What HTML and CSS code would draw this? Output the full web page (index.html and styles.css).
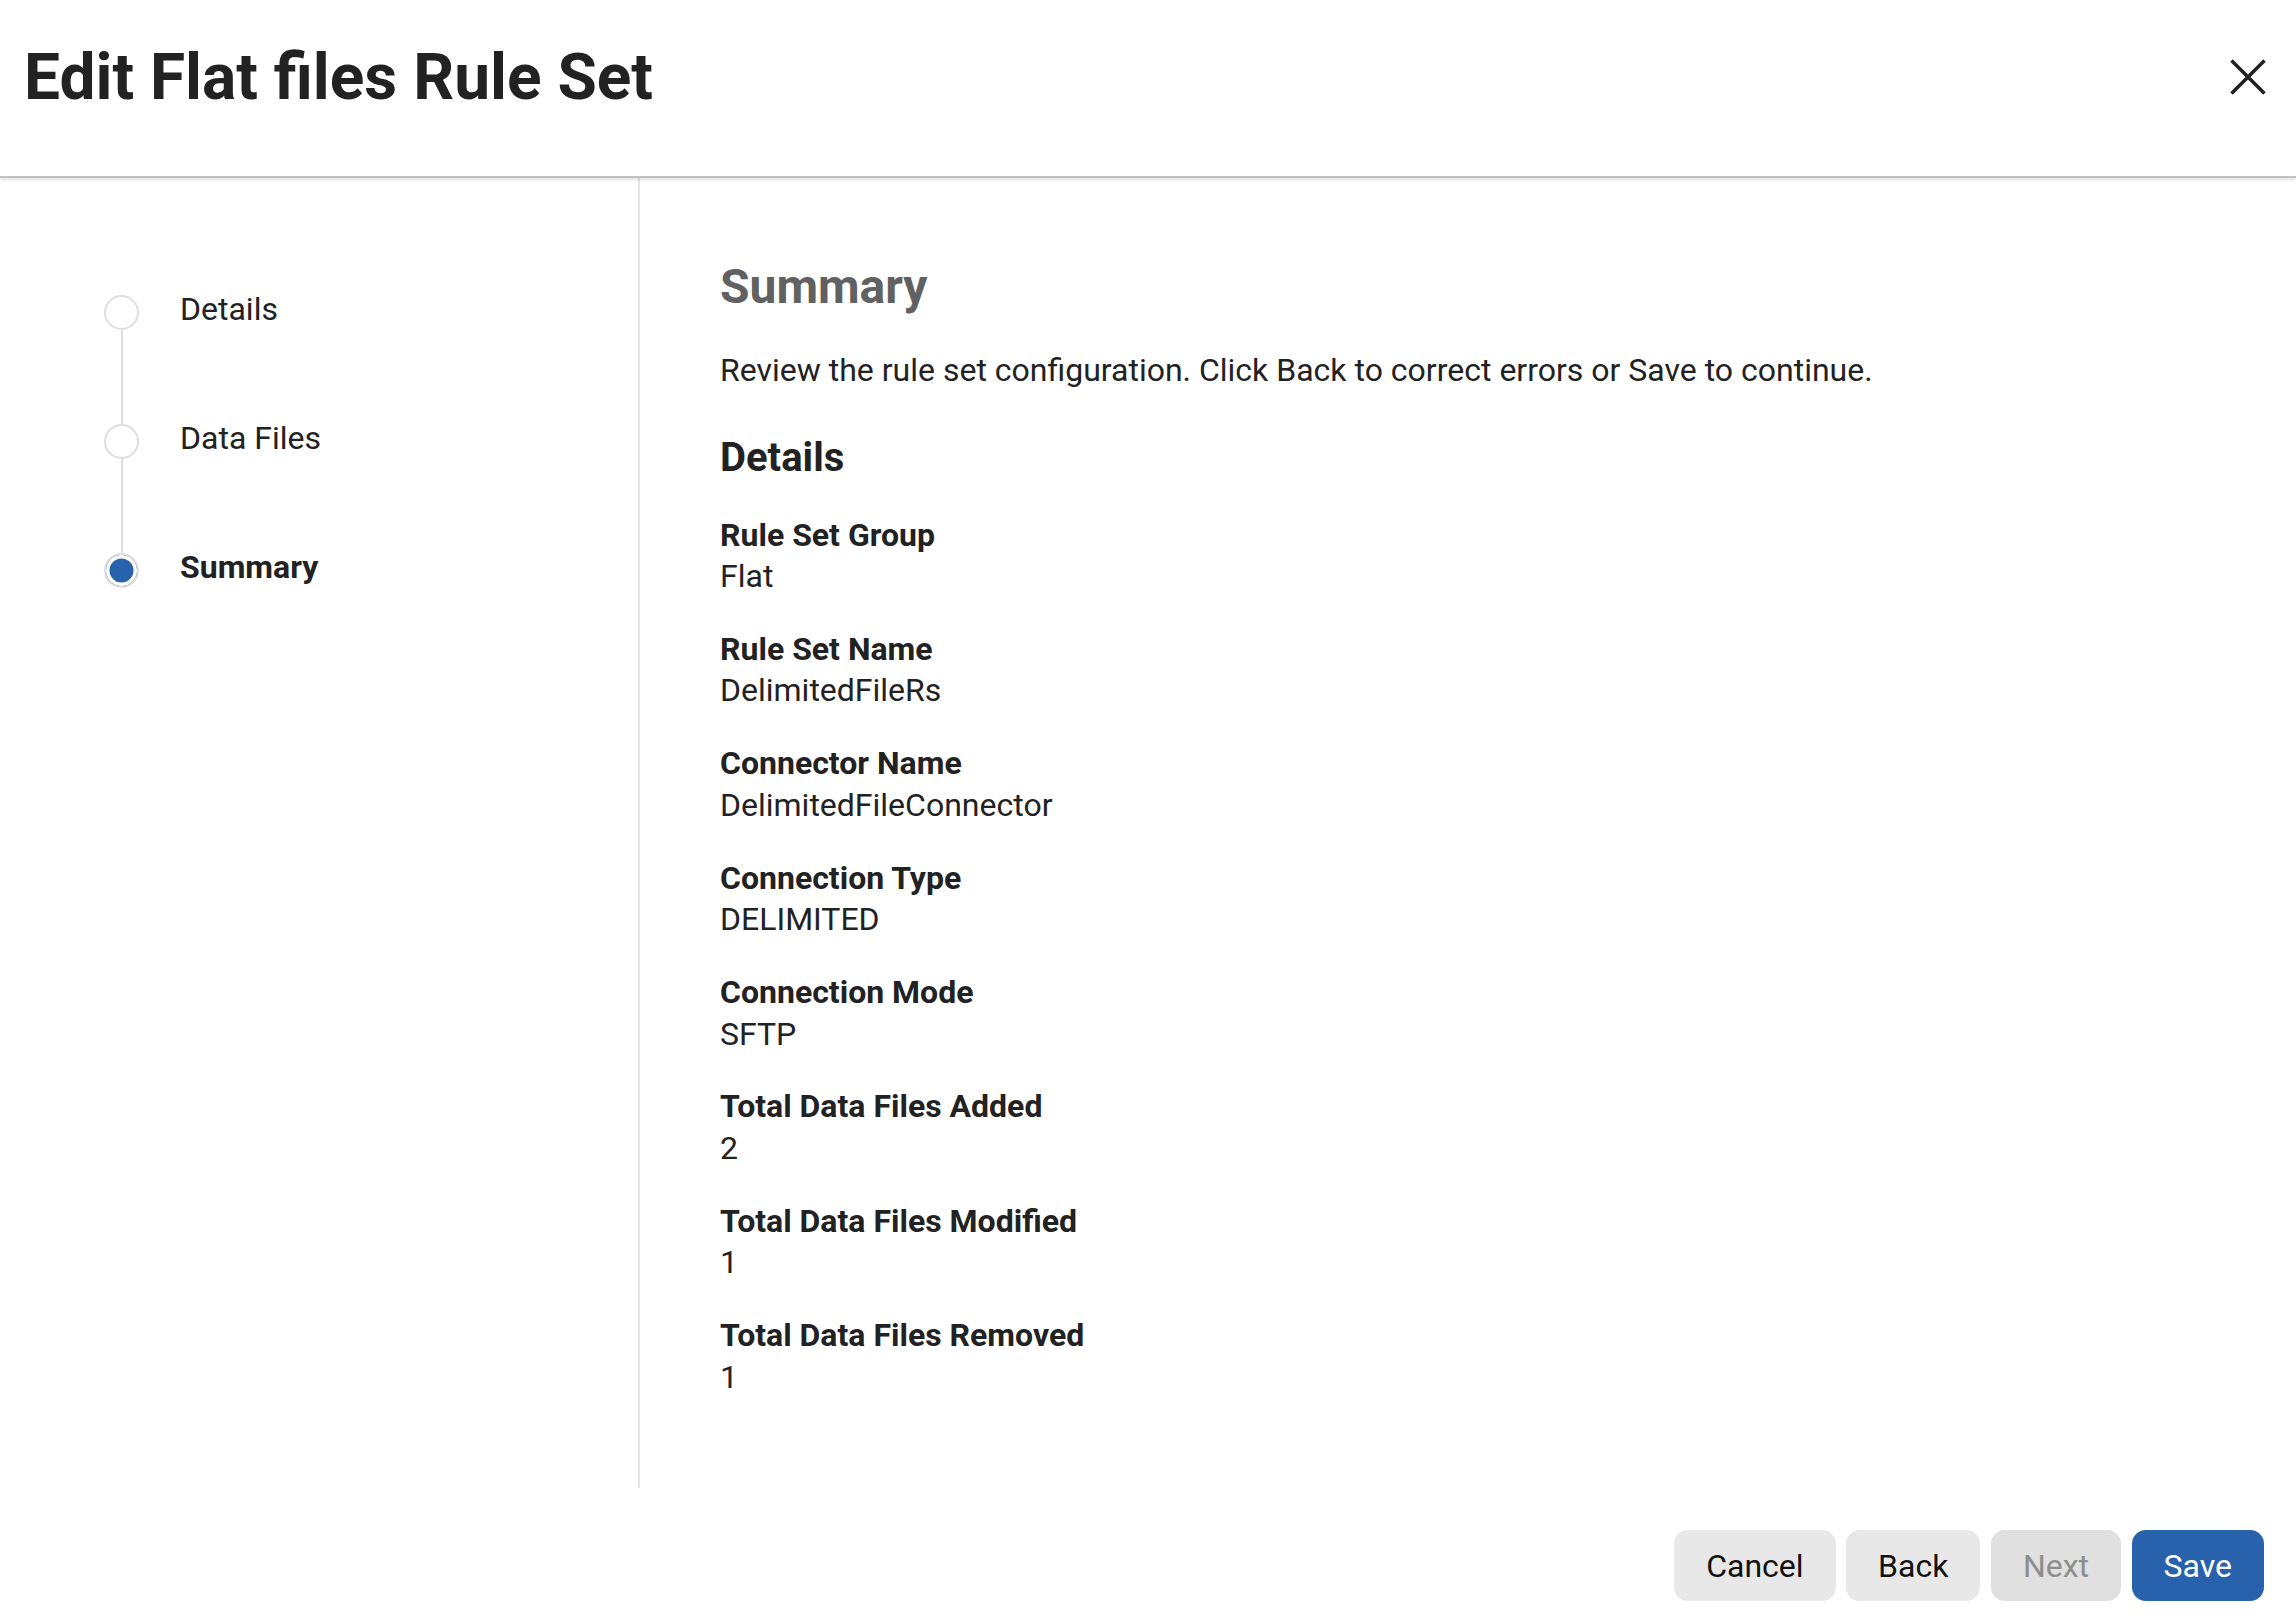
FILE: index.html
```html
<html>
<head>
    <title>Edit Flat files Rule Set</title>
<link rel="stylesheet" href="styles.css">
</head>
<body>
<div class="dialog">
    <div class="dialog-header">
        <h1 class="dialog-title">Edit Flat files Rule Set</h1>
        <button class="close-btn" title="Close">
            <svg width="36" height="36" viewBox="0 0 36 36">
                <path d="M1.5 1.5 L34.5 34.5 M34.5 1.5 L1.5 34.5" stroke="#222" stroke-width="3.6" fill="none"/>
            </svg>
        </button>
    </div>

    <div class="dialog-body">
        <div class="steps">
            <div class="step done">
                <div class="step-marker">
                    <span class="step-dot"></span>
                    <span class="step-line"></span>
                </div>
                <span class="step-label">Details</span>
            </div>
            <div class="step done">
                <div class="step-marker">
                    <span class="step-dot"></span>
                    <span class="step-line"></span>
                </div>
                <span class="step-label">Data Files</span>
            </div>
            <div class="step current">
                <div class="step-marker">
                    <span class="step-dot"></span>
                </div>
                <span class="step-label">Summary</span>
            </div>
        </div>

        <div class="summary">
            <h2 class="summary-title">Summary</h2>
            <p class="summary-intro">Review the rule set configuration. Click Back to correct errors or Save to continue.</p>

            <h3 class="section-title">Details</h3>
            <dl class="fields">
                <div class="field">
                    <dt>Rule Set Group</dt>
                    <dd>Flat</dd>
                </div>
                <div class="field">
                    <dt>Rule Set Name</dt>
                    <dd>DelimitedFileRs</dd>
                </div>
                <div class="field">
                    <dt>Connector Name</dt>
                    <dd>DelimitedFileConnector</dd>
                </div>
                <div class="field">
                    <dt>Connection Type</dt>
                    <dd>DELIMITED</dd>
                </div>
                <div class="field">
                    <dt>Connection Mode</dt>
                    <dd>SFTP</dd>
                </div>
                <div class="field">
                    <dt>Total Data Files Added</dt>
                    <dd>2</dd>
                </div>
                <div class="field">
                    <dt>Total Data Files Modified</dt>
                    <dd>1</dd>
                </div>
                <div class="field">
                    <dt>Total Data Files Removed</dt>
                    <dd>1</dd>
                </div>
            </dl>
        </div>
    </div>

    <div class="dialog-footer">
        <button class="btn">Cancel</button>
        <button class="btn">Back</button>
        <button class="btn" disabled>Next</button>
        <button class="btn btn-primary">Save</button>
    </div>
</div>
</body>
</html>
```

FILE: styles.css
```css
html, body {
    margin: 0;
    height: 100%;
}
body {
    font-family: Roboto, "Liberation Sans", sans-serif;
    color: #222;
    background: #fff;
}
.dialog {
    display: flex;
    flex-direction: column;
    height: 100%;
}

/* header */
.dialog-header {
    height: 154px;
    padding: 0 30px 22px 24px;
    display: flex;
    align-items: center;
    justify-content: space-between;
    border-bottom: 2px solid #c2c2c2;
    box-shadow: 0 2px 3px rgba(0, 0, 0, 0.12);
    position: relative;
    z-index: 1;
}
.dialog-title {
    margin: 0;
    font-size: 64px;
    line-height: 77px;
    font-weight: 700;
    color: #222;
}
.close-btn {
    border: none;
    background: none;
    padding: 0;
    width: 36px;
    height: 36px;
    cursor: pointer;
}
.close-btn svg {
    display: block;
}

/* body */
.dialog-body {
    flex: 1;
    display: flex;
    min-height: 0;
}
.steps {
    width: 534px;
    padding: 117px 0 0 104px;
    border-right: 2px solid #e2e2e2;
}
.step {
    display: flex;
    align-items: flex-start;
}
.step-marker {
    width: 35px;
    display: flex;
    flex-direction: column;
    align-items: center;
}
.step-dot {
    box-sizing: border-box;
    width: 35px;
    height: 35px;
    border: 2px solid #dedede;
    border-radius: 50%;
    background: #fff;
}
.step-line {
    width: 2px;
    height: 94px;
    background: #dedede;
}
.step.current .step-dot {
    background: #2862ad;
    box-shadow: inset 0 0 0 3.5px #fff;
}
.step-label {
    margin-left: 41px;
    margin-top: 1px;
    font-size: 32px;
    line-height: 26px;
}
.step.current .step-label {
    font-weight: 700;
}

.summary {
    flex: 1;
    padding: 81px 0 0 80px;
}
.summary-title {
    margin: 0;
    font-size: 48px;
    line-height: 56px;
    font-weight: 700;
    color: #616161;
}
.summary-intro {
    margin: 35px 0 0 0;
    font-size: 32px;
    line-height: 40px;
}
.section-title {
    margin: 43.5px 0 0 0;
    font-size: 40px;
    line-height: 48px;
    font-weight: 700;
}
.fields {
    margin: 33px 0 0 0;
}
.field {
    margin-bottom: 31.2px;
}
.field dt {
    font-size: 32px;
    line-height: 41.6px;
    font-weight: 700;
}
.field dd {
    margin: 0;
    font-size: 32px;
    line-height: 41.6px;
}

/* footer */
.dialog-footer {
    display: flex;
    justify-content: flex-end;
    gap: 10.5px;
    padding: 42px 32px 21px 0;
}
.btn {
    height: 71px;
    padding: 0 32px;
    border: none;
    border-radius: 14px;
    background: #e8e8e8;
    color: #111;
    font-family: Roboto, "Liberation Sans", sans-serif;
    font-size: 32px;
    cursor: pointer;
}
.btn:disabled {
    background: #e0e0e0;
    color: #8e8e8e;
    cursor: default;
}
.btn-primary {
    background: #2862ad;
    color: #fff;
}
```
